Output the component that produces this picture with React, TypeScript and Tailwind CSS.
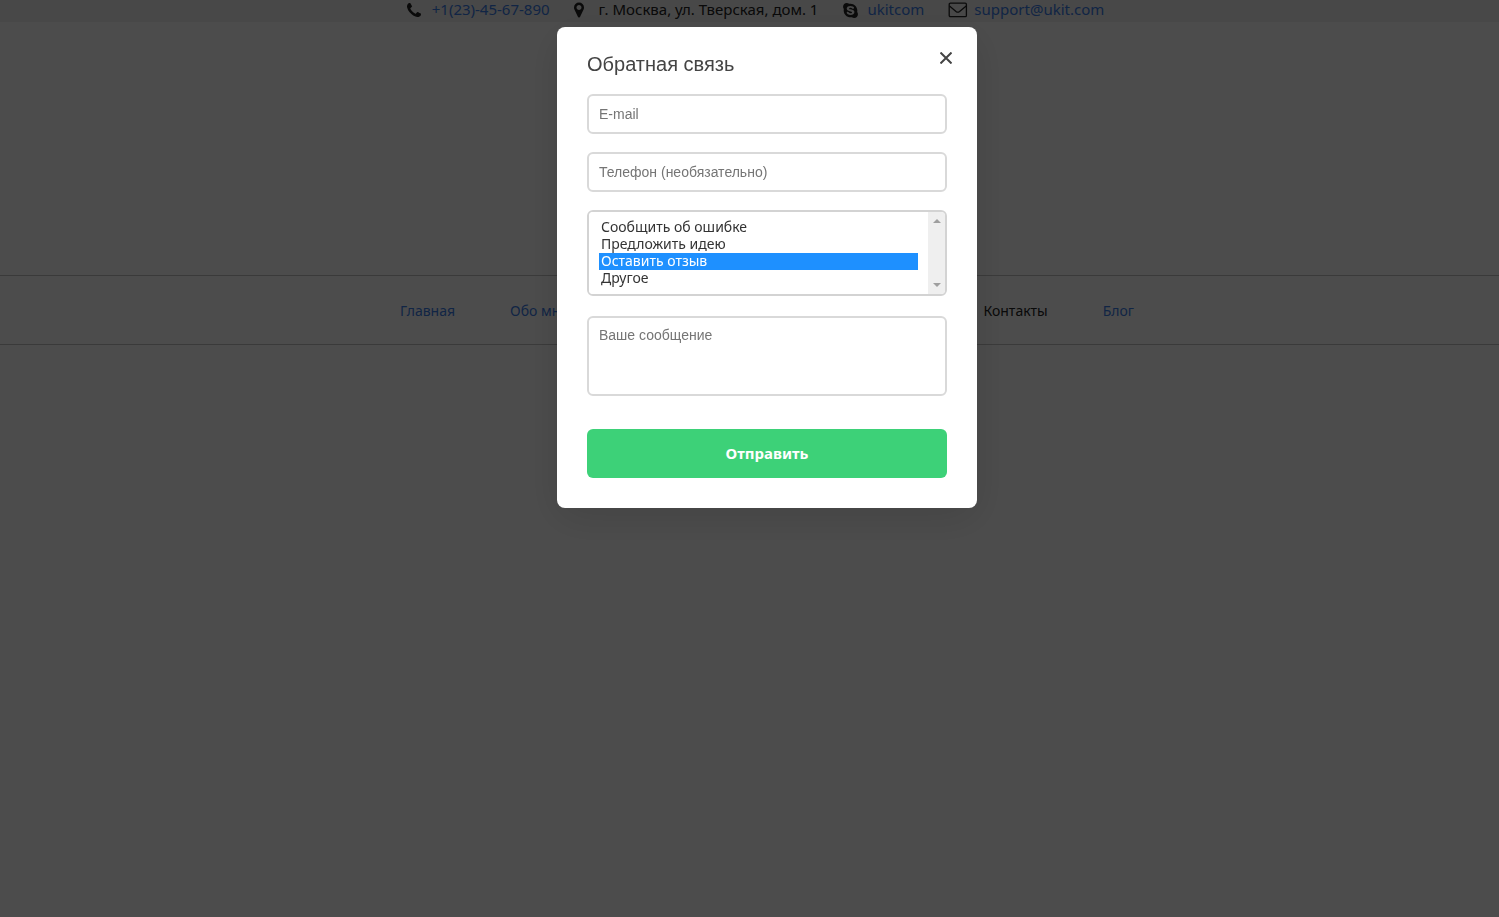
import { ReactNode } from 'react';
import { FaSkype } from 'react-icons/fa';

const topics = ['Сообщить об ошибке', 'Предложить идею', 'Оставить отзыв', 'Другое'];

const fieldClass =
  'block w-full rounded-md border-2 border-[#d9d9d9] bg-white px-[10px] font-["Liberation_Sans",Arial,sans-serif] text-sm text-[#444] placeholder:text-[#757575] outline-none';

function PhoneIcon() {
  return (
    <svg className="h-4 w-[14px]" viewBox="0 128 1408 1408" fill="currentColor" aria-hidden="true">
      <path d="M1408 1240q0 27-10 70.5t-21 68.5q-21 50-122 106-94 51-186 51-27 0-53-3.5t-57-12.5-47-14.5-55.5-20.5-49.5-18q-98-35-175-83-127-79-264-216t-216-264q-48-77-83-175-3-9-18-49.5t-20.5-55.5-14.5-47-12.5-57-3.5-53q0-92 51-186 56-101 106-122 25-11 68.5-21t70.5-10q14 0 21 3 18 6 53 76 11 19 30 54t35 63.5 31 53.5q3 4 17.5 25t21.5 35.5 7 28.5q0 20-28.5 50t-62 55-62 53-28.5 46q0 9 5 22.5t8.5 20.5 14 24 11.5 19q76 137 174 235t235 174q2 1 19 11.5t24 14 20.5 8.5 22.5 5q18 0 46-28.5t53-62 55-62 50-28.5q14 0 28.5 7t35.5 21.5 25 17.5q25 15 53.5 31t63.5 35 54 30q70 35 76 53 3 7 3 21z" />
    </svg>
  );
}

function MarkerIcon() {
  return (
    <svg className="h-4 w-[10px]" viewBox="0 128 1024 1536" fill="currentColor" aria-hidden="true">
      <path d="M768 640q0-106-75-181t-181-75-181 75-75 181 75 181 181 75 181-75 75-181zm256 0q0 109-33 179l-364 774q-16 33-47.5 52t-67.5 19-67.5-19-46.5-52l-365-774q-33-70-33-179 0-212 150-362t362-150 362 150 150 362z" />
    </svg>
  );
}

function MailIcon() {
  return (
    <svg className="h-4 w-5" viewBox="0 0 20 16" fill="none" stroke="currentColor" strokeWidth="1.3" aria-hidden="true">
      <rect x="1.2" y="1.2" width="17.2" height="13.4" rx="1.2" />
      <path d="M1.5 4 L8 9.4 Q9.8 10.8 11.6 9.4 L18.2 4" />
    </svg>
  );
}

function Contact({ icon, children }: { icon: ReactNode; children: ReactNode }) {
  return (
    <li className="flex items-center whitespace-nowrap">
      {icon}
      {children}
    </li>
  );
}

export default function App() {
  return (
    <div className="relative min-h-screen bg-white pb-10 font-['Noto_Sans','Open_Sans',sans-serif] text-sm text-[#222]">
      <header className="flex h-[22px] justify-center bg-[#f0f0f0] pl-[12px] text-[15px]">
        <ul className="flex h-5 items-center gap-6">
          <Contact icon={<span className="mr-[11px]"><PhoneIcon /></span>}>
            <a href="tel:+1234567890" className="text-[#3b7ce6]">+1(23)-45-67-890</a>
          </Contact>
          <Contact icon={<span className="mr-[15px]"><MarkerIcon /></span>}>
            <span>г. Москва, ул. Тверская, дом. 1</span>
          </Contact>
          <Contact icon={<FaSkype className="mr-2 h-[17px] w-[17px]" />}>
            <a href="skype:ukitcom" className="text-[#3b7ce6]">ukitcom</a>
          </Contact>
          <Contact icon={<span className="mr-[6px]"><MailIcon /></span>}>
            <a href="mailto:support@ukit.com" className="text-[#3b7ce6]">support@ukit.com</a>
          </Contact>
        </ul>
      </header>

      <nav className="mt-[253px] flex h-[70px] items-center justify-center border-y border-[#c4c4c4] pt-[2px] pl-[35px]">
        <div className="flex w-[734px] justify-between">
          <div className="flex gap-[55px]">
            <a href="#home" className="text-[#3b7ce6]">Главная</a>
            <a href="#about" className="text-[#3b7ce6]">Обо мне</a>
          </div>
          <div className="flex gap-[55px]">
            <a href="#contacts" aria-current="page">Контакты</a>
            <a href="#blog" className="text-[#3b7ce6]">Блог</a>
          </div>
        </div>
      </nav>

      <div className="fixed inset-0 flex items-start justify-center bg-black/70 pt-[27px] pl-[35px]">
        <div
          role="dialog"
          aria-labelledby="feedback-title"
          className="relative w-[420px] rounded-lg bg-white px-[30px] pt-[22px] pb-[30px] shadow-[0_10px_40px_rgba(0,0,0,0.12)]"
        >
          <h2 id="feedback-title" className="font-['Liberation_Sans',Arial,sans-serif] text-xl leading-[30px] text-[#444]">
            Обратная связь
          </h2>
          <button type="button" aria-label="Закрыть" className="absolute top-[23px] right-[23px] p-[2px] text-[#444]">
            <svg className="h-3 w-3" viewBox="0 0 12 12" stroke="currentColor" strokeWidth="2" aria-hidden="true">
              <path d="M0.5 0.5 L11.5 11.5 M11.5 0.5 L0.5 11.5" />
            </svg>
          </button>

          <form className="mt-[15px] flex flex-col" onSubmit={(e) => e.preventDefault()}>
            <input type="email" aria-label="E-mail" placeholder="E-mail" className={`${fieldClass} h-10`} />
            <input
              type="tel"
              aria-label="Телефон"
              placeholder="Телефон (необязательно)"
              className={`${fieldClass} mt-[18px] h-10`}
            />
            <div className="mt-[18px] flex h-[86px] overflow-hidden rounded-md border-2 border-[#d3d3d3]">
              <select
                size={4}
                aria-label="Тема"
                defaultValue="Оставить отзыв"
                className="min-w-0 flex-1 overflow-hidden bg-white px-[10px] py-[7px] text-[#333] outline-none"
              >
                {topics.map((topic) => (
                  <option
                    key={topic}
                    value={topic}
                    className="flex h-[17px] min-h-0 items-end px-[2px] py-0 text-sm checked:bg-[linear-gradient(#1e90ff,#1e90ff)] checked:[-webkit-text-fill-color:white]"
                  >
                    {topic}
                  </option>
                ))}
              </select>
              <div className="flex w-[17px] flex-col items-center justify-between bg-[#efefef] py-[7px] text-[#9f9f9f]">
                <svg className="h-1 w-2" viewBox="0 0 8 4" fill="currentColor" aria-hidden="true">
                  <path d="M0 4 L4 0 L8 4 Z" />
                </svg>
                <svg className="h-1 w-2" viewBox="0 0 8 4" fill="currentColor" aria-hidden="true">
                  <path d="M0 0 L4 4 L8 0 Z" />
                </svg>
              </div>
            </div>
            <textarea
              aria-label="Ваше сообщение"
              placeholder="Ваше сообщение"
              className={`${fieldClass} mt-5 h-20 resize-none py-[7px]`}
            />
            <button type="submit" className="mt-[33px] h-[49px] rounded-md bg-[#3dd178] text-[15px] font-bold text-white">
              Отправить
            </button>
          </form>
        </div>
      </div>
    </div>
  );
}
